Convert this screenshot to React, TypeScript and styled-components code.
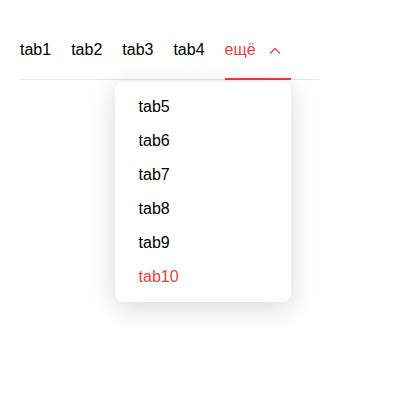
import styled, { createGlobalStyle } from "styled-components";

const GlobalStyle = createGlobalStyle`
  html, body {
    margin: 0;
    background: #ffffff;
    font-family: "Liberation Sans", Arial, sans-serif;
  }
`;

const RED = "#f23b3b";

const Page = styled.div`
  min-height: 100vh;
  padding: 20px;
  box-sizing: border-box;
`;

const TabBar = styled.div`
  width: 300px;
  height: 60px;
  display: flex;
  align-items: stretch;
  gap: 20px;
  border-bottom: 1px solid #e6e6e6;
  box-sizing: border-box;
`;

const Tab = styled.div<{ $active?: boolean }>`
  position: relative;
  display: flex;
  align-items: center;
  padding-top: 1px;
  font-size: 16px;
  color: ${(p) => (p.$active ? RED : "#000")};
  cursor: pointer;
`;

const MoreTab = styled(Tab)`
  gap: 13px;
  padding-right: 10px;

  &::after {
    content: "";
    position: absolute;
    left: 0;
    right: 0;
    bottom: -1px;
    height: 2px;
    background: ${RED};
  }
`;

const Menu = styled.div`
  position: absolute;
  top: 62px;
  right: 0;
  width: 176px;
  padding: 8px 0;
  background: #fff;
  border-radius: 8px;
  box-shadow: 0 6px 28px rgba(0, 0, 0, 0.15), 0 0 4px rgba(0, 0, 0, 0.04);
  z-index: 2;
`;

const MenuItem = styled.div<{ $active?: boolean }>`
  height: 34px;
  display: flex;
  align-items: center;
  padding-left: 24px;
  font-size: 16px;
  color: ${(p) => (p.$active ? RED : "#000")};
`;

const Chevron = () => (
  <svg width="12" height="12" viewBox="0 0 12 12" fill="none">
    <path
      d="M1.5 9L6 4.5L10.5 9"
      stroke={RED}
      strokeWidth="1.3"
      strokeLinecap="round"
      strokeLinejoin="round"
    />
  </svg>
);

const tabs = ["tab1", "tab2", "tab3", "tab4"];
const extra = ["tab5", "tab6", "tab7", "tab8", "tab9", "tab10"];

export default function App() {
  return (
    <Page>
      <GlobalStyle />
      <TabBar>
        {tabs.map((t) => (
          <Tab key={t}>{t}</Tab>
        ))}
        <MoreTab $active>
          ещё
          <Chevron />
          <Menu>
            {extra.map((t) => (
              <MenuItem key={t} $active={t === "tab10"}>
                {t}
              </MenuItem>
            ))}
          </Menu>
        </MoreTab>
      </TabBar>
    </Page>
  );
}
